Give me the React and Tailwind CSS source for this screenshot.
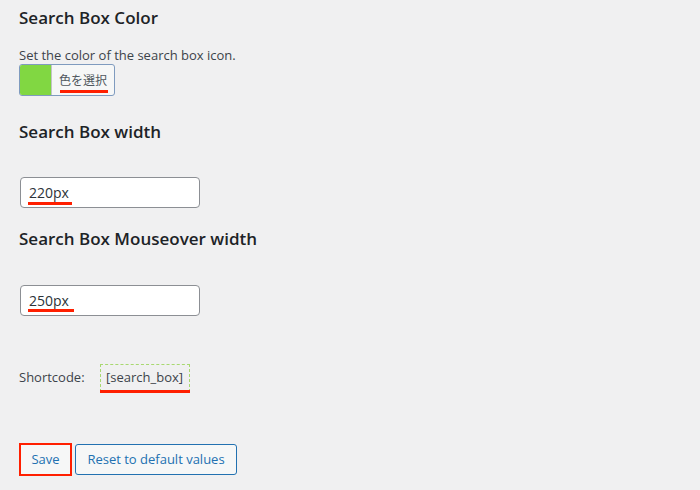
import React from "react";

const font = "font-['Open_Sans','Noto_Sans','Noto_Sans_CJK_JP',sans-serif]";

function Underline({ className }) {
  return <div className={"absolute h-[3px] bg-[#ff1f00] " + className} />;
}

export default function App() {
  return (
    <div className={"min-h-[490px] w-[700px] bg-[#f0f0f1] pl-[19px] pt-[6px] text-[#3c434a] " + font}>
      <h2 className="text-[17px] leading-[24px] font-semibold text-[#1d2327]">Search Box Color</h2>
      <p className="mt-[16px] text-[13px] leading-[18px]">Set the color of the search box icon.</p>
      <div className="relative flex h-[32px] w-[96px] overflow-hidden rounded-[3px] border border-[#7f9bbf] bg-[#f6f7f7]">
        <div className="w-[31px] bg-[#81d742]" />
        <div className="flex flex-1 items-center justify-center border-l border-[#c3c4c7] text-[12px] text-[#50575e] font-['Noto_Sans_CJK_JP',sans-serif]">
          色を選択
        </div>
        <Underline className="left-[40px] top-[25px] w-[48px]" />
      </div>

      <h2 className="mt-[24px] text-[17px] leading-[24px] font-semibold text-[#1d2327]">Search Box width</h2>
      <div className="relative ml-[1px] mt-[33px] flex h-[31px] w-[180px] items-center rounded-[4px] border border-[#8c8f94] bg-white pl-[8px] text-[14px] text-[#2c3338]">
        220px
        <Underline className="left-[7px] top-[24px] w-[44px]" />
      </div>

      <h2 className="mt-[19px] text-[17px] leading-[24px] font-semibold text-[#1d2327]">Search Box Mouseover width</h2>
      <div className="relative ml-[1px] mt-[34px] flex h-[31px] w-[180px] items-center rounded-[4px] border border-[#8c8f94] bg-white pl-[8px] text-[14px] text-[#2c3338]">
        250px
        <Underline className="left-[7px] top-[23px] w-[46px]" />
      </div>

      <div className="mt-[48px] flex items-center text-[13px]">
        <span>Shortcode:</span>
        <div className="relative ml-[15px] flex h-[28px] w-[90px] items-center justify-center border border-dashed border-[#a8d870] text-[#3c434a]">
          [search_box]
          <Underline className="-left-[1px] top-[25px] w-[90px]" />
        </div>
      </div>

      <div className="mt-[51px] flex items-center text-[13px]">
        <button className="flex h-[33px] w-[53px] items-center justify-center border-2 border-[#ff1f00] bg-[#f6f7f7] text-[#2271b1]">
          Save
        </button>
        <button className="ml-[3px] flex h-[31px] w-[162px] items-center justify-center rounded-[3px] border border-[#2271b1] bg-[#f6f7f7] text-[#2271b1]">
          Reset to default values
        </button>
      </div>
    </div>
  );
}
